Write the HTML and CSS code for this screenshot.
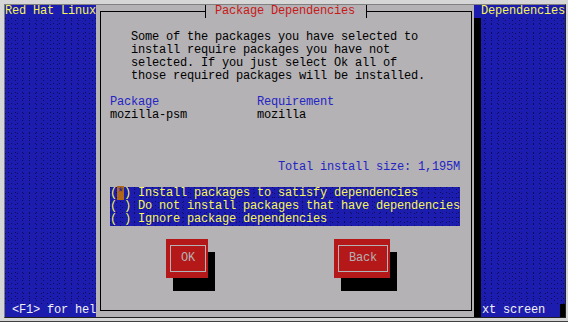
FILE: index.html
```html
<!DOCTYPE html>
<html>
<head>
<meta charset="utf-8">
<link rel="stylesheet" href="styles.css">
</head>
<body>
<div class="screen">
  <div class="term">
    <div class="row top"><span>Red Hat Linux</span><span>Dependencies</span></div>
    <div class="fill"></div>
    <div class="row bottom"><span> &lt;F1&gt; for hel</span><span class="right">xt screen<span class="cursor"></span></span></div>

    <div class="dialog">
      <div class="frame">
        <div class="title"><span class="tee tee-l"></span><span class="tname"> Package Dependencies </span><span class="tee tee-r"></span></div>
        <p class="msg">Some of the packages you have selected to
install require packages you have not
selected. If you just select Ok all of
those required packages will be installed.</p>
        <div class="deps">
          <span class="hdr">Package</span><span class="hdr">Requirement</span>
          <span>mozilla-psm</span><span>mozilla</span>
        </div>
        <div class="total">Total install size: 1,195M</div>
        <div class="list">
          <div class="item">(<span class="cur">*</span>) Install packages to satisfy dependencies</div>
          <div class="item">( ) Do not install packages that have dependencies</div>
          <div class="item">( ) Ignore package dependencies</div>
        </div>
        <div class="buttons">
          <div class="btn btn-ok"><div class="btn-in">OK</div></div>
          <div class="btn btn-back"><div class="btn-in">Back</div></div>
        </div>
      </div>
    </div>
  </div>
</div>
</body>
</html>
```
FILE: styles.css
```css
:root {
  --blue: #1c1cae;
  --dot: #0e0e58;
  --gray: #b4b2b4;
  --yellow: #f6f65a;
}

body {
  margin: 0;
  background: #d6d6d6;
}

.screen {
  width: 568px;
  height: 322px;
  box-sizing: border-box;
  padding: 4px 2px 4px 4px;
  background: #d6d6d6;
  border-bottom: 1px solid #404040;
}

.term {
  position: relative;
  width: 560px;
  height: 312px;
  border-top: 1px solid #808080;
  border-left: 1px solid #808080;
  border-right: 1px solid #202020;
  border-bottom: 1px solid #202020;
  background: var(--blue);
  display: flex;
  flex-direction: column;
  overflow: hidden;
  font-family: "Liberation Mono", monospace;
  font-size: 12px;
  letter-spacing: -0.2px;
  line-height: 13px;
}

.row {
  height: 13px;
  display: flex;
  justify-content: space-between;
  white-space: pre;
  background: var(--blue);
}

.top { color: var(--yellow); }
.bottom { color: #f2f2f2; }

.right {
  display: flex;
  align-items: stretch;
}

.cursor {
  width: 5px;
  margin-left: 15px;
  background: #000;
}

.fill,
.list {
  background-color: var(--blue);
  background-image:
    radial-gradient(circle at 0.5px 0.5px, var(--dot) 0.5px, transparent 0.6px),
    radial-gradient(circle at 0.5px 0.5px, var(--dot) 0.5px, transparent 0.6px);
  background-size: 6px 5px, 7px 4px;
  background-position: 0 0, 3px 2px;
}

.fill { flex: 1; }

.dialog {
  position: absolute;
  left: 91px;
  top: 0;
  width: 378px;
  height: 312px;
  box-sizing: border-box;
  padding: 6px 2px 6px 4px;
  background: var(--gray);
  box-shadow: 7px 13px 0 #000;
  color: #000;
}

.frame {
  height: 100%;
  box-sizing: border-box;
  border: 1px solid #000;
  padding-left: 9px;
}

.title {
  display: flex;
  justify-content: center;
  height: 13px;
  margin: -7px 2px 0 -9px;
  color: #c81818;
  white-space: pre;
}

.tee {
  width: 7px;
  height: 13px;
  background-color: var(--gray);
  background-image: linear-gradient(#000, #000), linear-gradient(#000, #000);
  background-repeat: no-repeat;
}

.tee-l {
  background-size: 1px 13px, 4px 1px;
  background-position: 4px 0, 0 6px;
}

.tee-r {
  background-size: 1px 13px, 3px 1px;
  background-position: 4px 0, 4px 6px;
}

.tname { background: var(--gray); }

.msg {
  margin: 13px 0 0 21px;
  white-space: pre;
}

.deps {
  margin-top: 13px;
  display: grid;
  grid-template-columns: 147px auto;
}

.hdr { color: #2424c4; }

.total {
  margin-top: 39px;
  width: 350px;
  text-align: right;
  color: #2424c4;
}

.list {
  margin-top: 13px;
  width: 350px;
  color: var(--yellow);
}

.item { white-space: pre; }

.cur {
  background: #b06818;
  color: #1a1aa8;
}

.buttons {
  margin-top: 13px;
  display: flex;
  gap: 126px;
  padding-left: 56px;
}

.btn {
  height: 39px;
  box-sizing: border-box;
  padding: 6px 2px 6px 4px;
  background: #b41818;
  box-shadow: 7px 13px 0 #000;
  color: var(--gray);
}

.btn-ok { width: 42px; }
.btn-back { width: 56px; }

.btn-in {
  height: 100%;
  box-sizing: border-box;
  border: 1px solid var(--gray);
  display: flex;
  align-items: center;
  justify-content: center;
}
```
